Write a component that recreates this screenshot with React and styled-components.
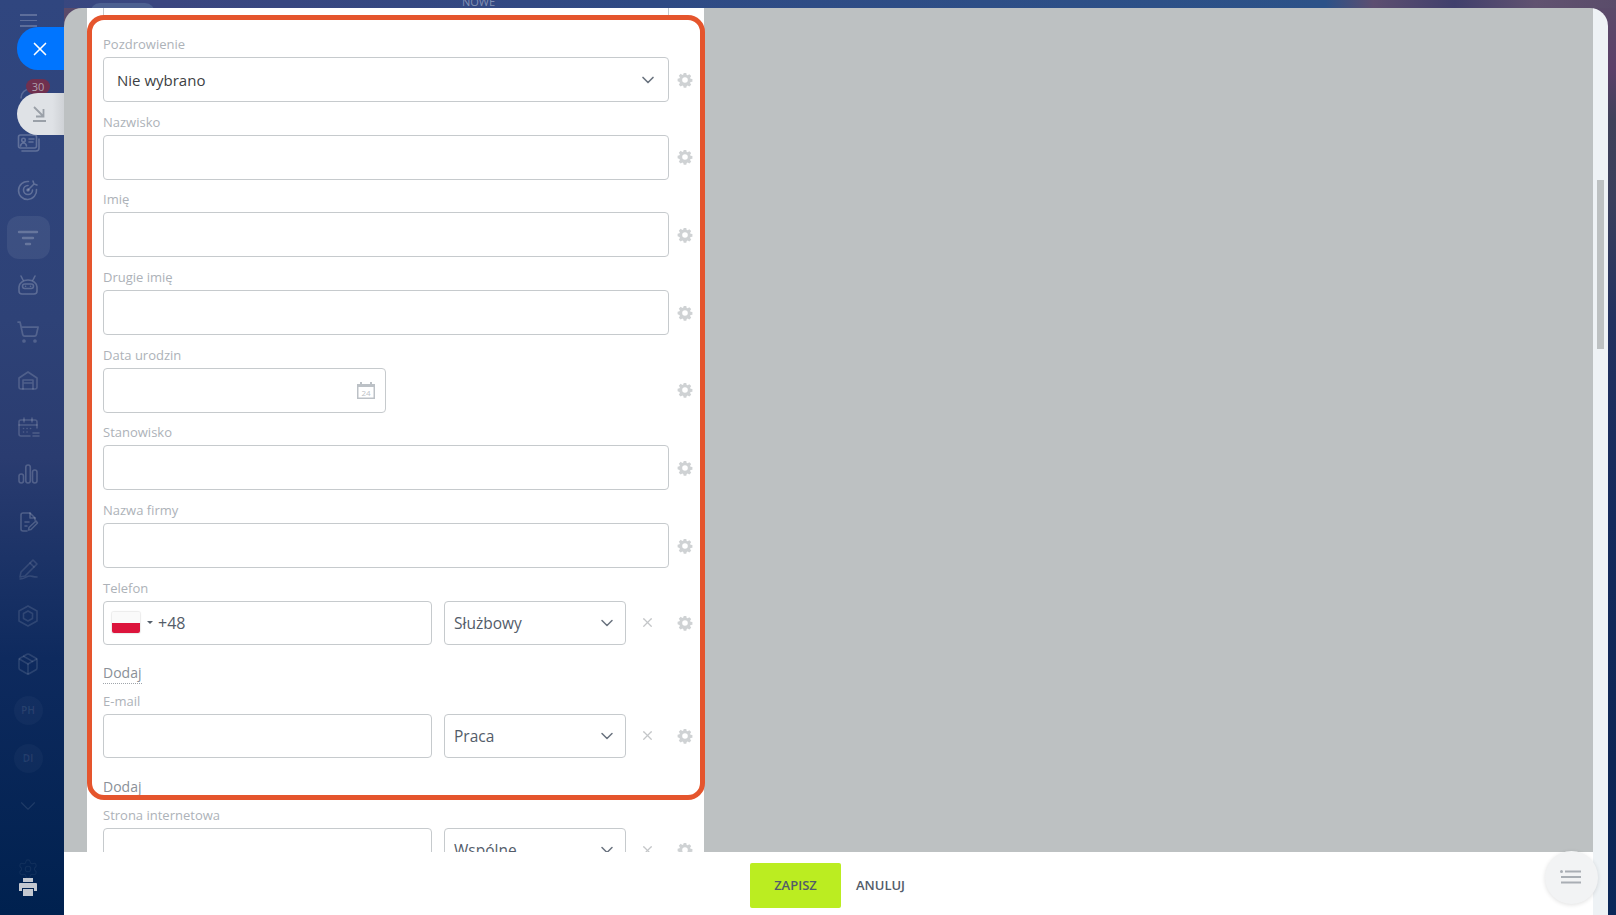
import React from 'react';
import styled, { createGlobalStyle } from 'styled-components';
import { X, ChevronDown, ShoppingCart, Settings, Package } from 'lucide-react';

const GlobalStyle = createGlobalStyle`
  html, body { margin: 0; padding: 0; height: 100%; overflow: hidden; }
  body { font-family: "Open Sans", "Liberation Sans", sans-serif; background: #14295c; }
  * { box-sizing: border-box; }
`;

const Gear = () => (
  <svg width="16" height="16" viewBox="0 0 16 16">
    <path
      fill="#cfd2d4"
      fillRule="evenodd"
      d="M6.7 1h2.6l.4 1.9 1 .4 1.6-1.1 1.9 1.9-1.1 1.6.4 1 1.9.4v2.6l-1.9.4-.4 1 1.1 1.6-1.9 1.9-1.6-1.1-1 .4-.4 1.9H6.7l-.4-1.9-1-.4-1.6 1.1-1.9-1.9 1.1-1.6-.4-1L.6 9.3V6.7l1.9-.4.4-1-1.1-1.6 1.9-1.9 1.6 1.1 1-.4zM8 5.2a2.8 2.8 0 1 0 0 5.6 2.8 2.8 0 0 0 0-5.6z"
    />
  </svg>
);

// sidebar entries fade out towards the bottom, as behind the slider's overlay
const navIcons = [
  { dim: 0.2, icon: <path d="M5 14a9 9 0 0 1 9-9" /> },
  { dim: 0.24, icon: <g><rect x="2.5" y="4" width="18" height="13" rx="2" /><path d="M23 8v9a3 3 0 0 1-3 3H6" /><circle cx="7.5" cy="9" r="1.8" /><path d="M4.5 15c.4-2 1.6-3 3-3s2.6 1 3 3M13 8h5M13 11h4" /></g> },
  { dim: 0.24, icon: <g><path d="M20.5 11.5A9 9 0 1 1 12.5 3.5" /><path d="M16.5 12a4.5 4.5 0 1 1-4.5-4.5" /><path d="M12 12l6-6M17 3l1 3 3 1" /><circle cx="12" cy="12" r="1" /></g> },
  { dim: 0.22, icon: <g strokeWidth="2.4"><path d="M3 6h18M7 12h10M10 18h4" /></g> },
  { dim: 0.22, icon: <g><path d="M7 7L5 3M17 7l2-4" /><path d="M3 14a9 7 0 0 1 18 0v4a3 3 0 0 1-3 3H6a3 3 0 0 1-3-3z" /><rect x="6.5" y="11" width="11" height="4.5" rx="2.2" /><path d="M9.5 13.2h.1M14.5 13.2h.1" /></g> },
  { dim: 0.18, icon: <ShoppingCart x="0" y="0" width="24" height="24" strokeWidth="1.7" /> },
  { dim: 0.17, icon: <g><path d="M3 10l9-6 9 6v9a2 2 0 0 1-2 2H5a2 2 0 0 1-2-2z" /><path d="M7 21v-9h10v9M7 15h10" /></g> },
  { dim: 0.17, icon: <g><path d="M21 13V7a2 2 0 0 0-2-2H5a2 2 0 0 0-2 2v12a2 2 0 0 0 2 2h9" /><path d="M8 3v4M16 3v4M3 10h18M7.5 13.5h.1M11 13.5h.1M14.5 13.5h.1M7.5 17h.1M11 17h.1M17 18h6M17 21h6" /></g> },
  { dim: 0.2, icon: <g><rect x="3" y="12" width="4.5" height="9" rx="2.2" /><rect x="9.8" y="3" width="4.5" height="18" rx="2.2" /><rect x="16.5" y="8" width="4.5" height="13" rx="2.2" /></g> },
  { dim: 0.2, icon: <g><path d="M11 21H7a2 2 0 0 1-2-2V5a2 2 0 0 1 2-2h7l5 5v2" /><path d="M14 3v5h5M9 12h4M9 16h2" /><path d="M21.5 13L15 19.5l-2.5.5.5-2.5L20 11z" /></g> },
  { dim: 0.12, icon: <g><path d="M17 3l4 4L9 19l-5 1 1-5z" /><path d="M14 6l4 4M4 22c5 0 6-3 10-3 2 0 3 1 7 1" /></g> },
  { dim: 0.12, icon: <g><path d="M12 2l9 5v10l-9 5-9-5V7z" /><path d="M12 7l4.5 2.5v5L12 17l-4.5-2.5v-5z" /></g> },
  { dim: 0.12, icon: <Package x="0" y="0" width="24" height="24" strokeWidth="1.6" /> },
];

const FIELDS = ['Nazwisko', 'Imię', 'Drugie imię'];
const FIELDS_AFTER_DATE = ['Stanowisko', 'Nazwa firmy'];

const Field = ({ label, children, removable, compact }) => (
  <FieldBlock>
    <FieldLabel $compact={compact}>{label}</FieldLabel>
    <FieldRow>
      <FieldControl>
        {children}
        {removable && <RemoveSlot><X size={15} strokeWidth={2} color="#c4c6c8" /></RemoveSlot>}
      </FieldControl>
      <GearSlot><Gear /></GearSlot>
    </FieldRow>
  </FieldBlock>
);

const TypeChoice = ({ children }) => (
  <TypeSelect>
    {children}
    <ChevronDown size={20} strokeWidth={1.8} color="#6a737f" />
  </TypeSelect>
);

const App = () => {
  return (
    <Page>
      <GlobalStyle />
      <BackdropPill />
      <BackdropHeading>NOWE</BackdropHeading>

      <Sidebar>
        <Hamburger><span /><span /><span /></Hamburger>
        <NavList>
          {navIcons.map((item, i) => (
            <NavItem key={i} $active={i === 3} $dim={item.dim}>
              <svg width="24" height="24" viewBox="0 0 24 24" fill="none" stroke="currentColor" strokeWidth="1.6" strokeLinecap="round" strokeLinejoin="round">
                {item.icon}
              </svg>
            </NavItem>
          ))}
          <NavItem><Avatar>PH</Avatar></NavItem>
          <NavItem><Avatar>DI</Avatar></NavItem>
          <NavItem><ChevronDown size={26} strokeWidth={1} color="rgba(255,255,255,0.1)" /></NavItem>
        </NavList>
        <SideBottom>
          <Settings size={22} strokeWidth={1.2} color="rgba(255,255,255,0.06)" />
          <PrinterIcon width="20" height="20" viewBox="0 0 20 20">
            <path fill="#c4c8d0" d="M5 1h10v4H5zM1 7a1 1 0 0 1 1-1h16a1 1 0 0 1 1 1v7h-3v-3H4v3H1zM5 12h10v7H5z" />
          </PrinterIcon>
        </SideBottom>
      </Sidebar>

      <Badge>30</Badge>
      <CloseTab><X size={22} strokeWidth={1.8} color="#fff" /></CloseTab>
      <MinimizeTab>
        <svg width="18" height="18" viewBox="0 0 18 18" fill="none" stroke="#9aa0a8" strokeWidth="1.8">
          <path d="M3 2l9 9M12.5 4v7.5H5M2 16h13" />
        </svg>
      </MinimizeTab>

      <Slider>
        <Main>
          <Content>
            <FormPanel>
              <ClippedInput />
              <Field label="Pozdrowienie">
                <SelectBox>
                  Nie wybrano
                  <ChevronDown size={20} strokeWidth={2} color="#6a737f" />
                </SelectBox>
              </Field>
              {FIELDS.map((name) => (
                <Field key={name} label={name}><TextInput readOnly /></Field>
              ))}
              <Field label="Data urodzin">
                <DateBox>
                  <svg width="18" height="17" viewBox="0 0 18 17">
                    <path fill="#bcc1c6" d="M0 2h3V0h2v2h8V0h2v2h3v15H0z" />
                    <rect x="1.5" y="5" width="15" height="10.5" fill="#fff" />
                    <text x="9" y="13.5" fontSize="8" fill="#bcc1c6" textAnchor="middle" fontFamily="Open Sans">24</text>
                  </svg>
                </DateBox>
              </Field>
              {FIELDS_AFTER_DATE.map((name) => (
                <Field key={name} label={name}><TextInput readOnly /></Field>
              ))}
              <Field label="Telefon" removable>
                <ValueInput>
                  <Flag />
                  <Caret />
                  <PhoneCode>+48</PhoneCode>
                </ValueInput>
                <TypeChoice>Służbowy</TypeChoice>
              </Field>
              <AddLink>Dodaj</AddLink>
              <Field label="E-mail" removable compact>
                <ValueInput />
                <TypeChoice>Praca</TypeChoice>
              </Field>
              <AddLink $plain>Dodaj</AddLink>
              <Field label="Strona internetowa" removable compact>
                <ValueInput />
                <TypeChoice>Wspólne</TypeChoice>
              </Field>
            </FormPanel>
          </Content>
          <Footer>
            <SaveButton>ZAPISZ</SaveButton>
            <CancelButton>ANULUJ</CancelButton>
          </Footer>
        </Main>
        <ScrollTrack><ScrollThumb /></ScrollTrack>
      </Slider>

      <Annotation />
      <MenuBubble>
        <svg width="22" height="14" viewBox="0 0 22 14" fill="#a9aeb4">
          <circle cx="1.5" cy="1.5" r="1.5" />
          <rect x="5" y="0.5" width="16" height="2" />
          <rect x="1" y="6" width="20" height="2" />
          <rect x="1" y="11.5" width="20" height="2" />
        </svg>
      </MenuBubble>
    </Page>
  );
};

export default App;

const Page = styled.div`
  position: relative;
  display: flex;
  width: 1616px;
  height: 915px;
  overflow: hidden;
  background:
    linear-gradient(90deg, #36487f 0%, #3b4680 10%, #2f4a84 40%, #2c5288 82%, #5d4e70 85%, #403f6c 90%, #615270 95%, #5a4c6a 100%) top / 100% 8px no-repeat,
    linear-gradient(180deg, #5a4c6a 0, #5a3f68 70px, #3f4159 120px, #3a3f5c 200px, #22315f 320px, #142a5c 520px, #0d2655 760px, #0a2759 915px);
`;

const BackdropPill = styled.div`
  position: absolute;
  top: 3px;
  left: 90px;
  width: 65px;
  height: 20px;
  border-radius: 10px;
  background: #4d6091;
`;

const BackdropHeading = styled.div`
  position: absolute;
  top: -5px;
  left: 462px;
  font-size: 11px;
  line-height: 14px;
  color: rgba(255, 255, 255, 0.4);
`;

const Sidebar = styled.aside`
  flex: 0 0 64px;
  height: 915px;
  display: flex;
  flex-direction: column;
  padding: 14px 8px 0 0;
  background: linear-gradient(180deg, #30467f 0%, #2e4277 35%, #2a3c70 50%, #0e2a5e 72%, #00214f 100%);
`;

const Hamburger = styled.div`
  display: flex;
  flex-direction: column;
  gap: 4px;
  width: 17px;
  margin-left: 20px;
  margin-bottom: 45.5px;

  span {
    height: 1.5px;
    background: rgba(255, 255, 255, 0.22);
  }
`;

const NavList = styled.nav`
  display: flex;
  flex-direction: column;
`;

const NavItem = styled.div`
  position: relative;
  height: 47.33px;
  display: flex;
  align-items: center;
  justify-content: center;
  color: rgba(255, 255, 255, ${(p) => p.$dim || 0.2});

  ${(p) => p.$active && `
    &::before {
      content: '';
      position: absolute;
      left: 6.5px;
      top: 2px;
      width: 43px;
      height: 43px;
      border-radius: 12px;
      background: rgba(255, 255, 255, 0.07);
    }
  `}

  svg { position: relative; }
`;

const Avatar = styled.div`
  width: 29px;
  height: 29px;
  border-radius: 50%;
  background: rgba(255, 255, 255, 0.03);
  color: rgba(255, 255, 255, 0.09);
  font-size: 10px;
  font-weight: 700;
  line-height: 29px;
  text-align: center;
`;

const SideBottom = styled.div`
  margin-top: auto;
  display: flex;
  flex-direction: column;
  align-items: center;
  padding-bottom: 18px;

  svg:first-child { margin-bottom: -3px; }
`;

const PrinterIcon = styled.svg`
  display: block;
`;

const Badge = styled.div`
  position: absolute;
  left: 26px;
  top: 79px;
  width: 24px;
  height: 15px;
  border-radius: 8px;
  background: #70304f;
  color: #b0a3ae;
  font-size: 11px;
  line-height: 15px;
  text-align: center;
`;

const CloseTab = styled.div`
  position: absolute;
  left: 17px;
  top: 27px;
  width: 47px;
  height: 43px;
  display: flex;
  align-items: center;
  justify-content: center;
  padding-right: 2px;
  border-radius: 21px 0 0 21px;
  background: #0075ff;
`;

const MinimizeTab = styled.div`
  position: absolute;
  left: 17px;
  top: 93px;
  width: 47px;
  height: 42px;
  display: flex;
  align-items: center;
  justify-content: center;
  padding-right: 2px;
  border-radius: 21px 0 0 21px;
  background: linear-gradient(90deg, #dfe2e6 75%, #cfd2d6 100%);
`;

const Slider = styled.main`
  position: relative;
  flex: 0 0 1544px;
  height: 907px;
  margin-top: 8px;
  display: flex;
  border-radius: 18px 18px 0 0;
  overflow: hidden;
`;

const Main = styled.div`
  flex: 0 0 1529px;
  display: flex;
  flex-direction: column;
  background: #bdc1c2;
`;

const Content = styled.div`
  flex: 1;
  min-height: 0;
  overflow: hidden;
  padding-left: 23px;
`;

const FormPanel = styled.div`
  width: 617px;
  height: 100%;
  padding-left: 16px;
  background: #fff;
`;

const ClippedInput = styled.div`
  width: 566px;
  height: 8px;
  margin-bottom: 8.45px;
  border: 1px solid #c6cacd;
  border-width: 0 1px;
`;

const FieldBlock = styled.div`
  display: flex;
  flex-direction: column;
`;

const FieldLabel = styled.div`
  height: ${(p) => (p.$compact ? '30px' : '32.67px')};
  display: flex;
  align-items: flex-end;
  padding-bottom: 4px;
  color: #adb2b8;
  font-size: 13px;
  line-height: 18px;
`;

const FieldRow = styled.div`
  display: flex;
  align-items: center;
`;

const FieldControl = styled.div`
  flex: 0 0 566px;
  display: flex;
  align-items: center;
  gap: 12px;
`;

const GearSlot = styled.div`
  flex: 0 0 32px;
  display: flex;
  justify-content: center;
`;

const RemoveSlot = styled.div`
  flex: 0 0 31px;
  display: flex;
  justify-content: center;
  padding-right: 12px;
`;

const TextInput = styled.input`
  width: 100%;
  height: 45px;
  padding: 0 13px;
  border: 1px solid #c6cacd;
  border-radius: 4px;
  background: #fff;
  outline: none;
`;

const SelectBox = styled.div`
  width: 100%;
  height: 45px;
  display: flex;
  align-items: center;
  justify-content: space-between;
  padding: 0 10px 0 13px;
  border: 1px solid #c6cacd;
  border-radius: 4px;
  color: #3d3f43;
  font-size: 15px;
`;

const DateBox = styled.div`
  width: 283px;
  height: 45px;
  display: flex;
  align-items: center;
  justify-content: flex-end;
  padding-right: 10px;
  border: 1px solid #c6cacd;
  border-radius: 4px;
`;

const ValueInput = styled.div`
  flex: 0 0 329px;
  height: 44px;
  display: flex;
  align-items: center;
  padding-left: 8px;
  border: 1px solid #c6cacd;
  border-radius: 4px;
`;

const Flag = styled.div`
  width: 28px;
  height: 21px;
  border-radius: 2px;
  background: linear-gradient(180deg, #fafafa 50%, #dc143c 50%);
  box-shadow: 0 0 1px 1px rgba(0, 0, 0, 0.08);
`;

const Caret = styled.div`
  width: 0;
  height: 0;
  margin: 0 5px 0 7px;
  border-left: 3px solid transparent;
  border-right: 3px solid transparent;
  border-top: 3px solid #55606c;
`;

const PhoneCode = styled.span`
  color: #535c69;
  font-size: 16px;
`;

const TypeSelect = styled.div`
  flex: 0 0 182px;
  height: 44px;
  display: flex;
  align-items: center;
  justify-content: space-between;
  padding: 0 8px 0 9px;
  border: 1px solid #c6cacd;
  border-radius: 4px;
  color: #535c69;
  font-size: 15.5px;
`;

const AddLink = styled.div`
  width: 39px;
  height: 21px;
  margin-top: ${(p) => (p.$plain ? '19.6px' : '18px')};
  border-bottom: 1px dotted ${(p) => (p.$plain ? 'transparent' : '#a0a5ab')};
  color: #8a9098;
  font-size: 14px;
  line-height: 20px;
  white-space: nowrap;
`;

const Footer = styled.footer`
  flex: 0 0 63px;
  display: flex;
  align-items: flex-start;
  justify-content: center;
  padding: 11px 2px 0 0;
  background: #fff;
`;

const SaveButton = styled.div`
  width: 91px;
  height: 45px;
  border-radius: 2px;
  background: #bbed21;
  color: #535c69;
  font-size: 13px;
  font-weight: 600;
  line-height: 45px;
  text-align: center;
`;

const CancelButton = styled.div`
  margin-left: 15px;
  color: #535c69;
  font-size: 13px;
  font-weight: 600;
  line-height: 45px;
`;

const ScrollTrack = styled.div`
  flex: 0 0 15px;
  padding: 172px 0 0 4px;
  background: #eef2f5;
`;

const ScrollThumb = styled.div`
  width: 7px;
  height: 169px;
  background: #bdc1c2;
`;

const Annotation = styled.div`
  position: absolute;
  left: 87px;
  top: 15px;
  width: 618px;
  height: 785px;
  border: 5px solid #e5552d;
  border-radius: 17px;
  pointer-events: none;
`;

const MenuBubble = styled.div`
  position: absolute;
  left: 1545px;
  top: 851px;
  width: 53px;
  height: 53px;
  display: flex;
  align-items: center;
  justify-content: center;
  padding-right: 2px;
  padding-bottom: 2px;
  border-radius: 50%;
  background: #f2f3f4;
  box-shadow: 0 1px 4px rgba(0, 0, 0, 0.12);
`;
